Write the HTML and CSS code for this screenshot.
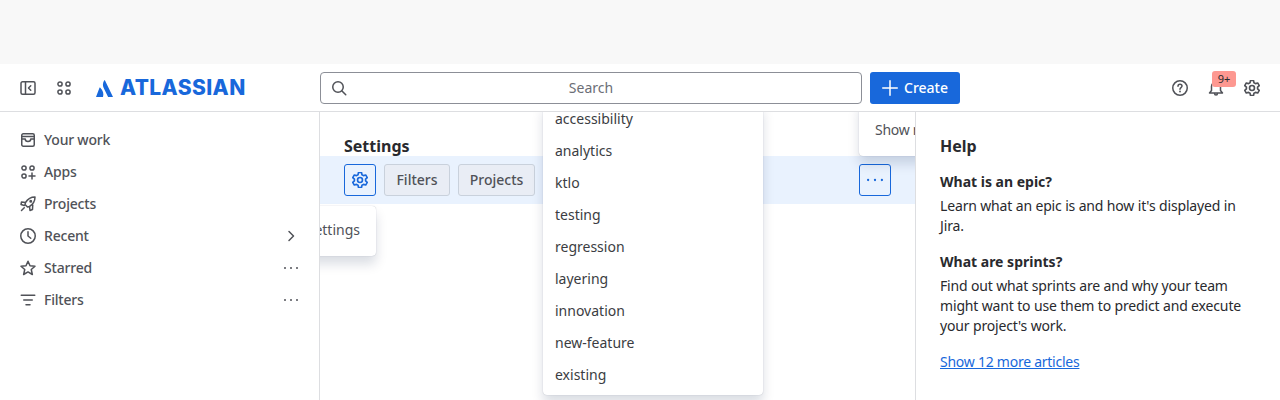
FILE: index.html
```html
<!DOCTYPE html>
<html>
    <head>
        <title>Jira</title>
        <link rel="stylesheet" href="styles.css">
    </head>
    <body>
        <svg class="sprite">
            <symbol id="gear" viewBox="0.7 0.7 14.6 14.6">
                <path d="M6.600 1.200h2.800l.4 2 1.400.8 2-.6 1.400 2.400-1.500 1.400v1.600l1.500 1.400-1.400 2.400-2-.6-1.400.8-.4 2H6.600l-.4-2-1.400-.8-2 .6-1.400-2.400 1.500-1.400V7.200L1.400 5.800l1.400-2.400 2 .6 1.400-.8z"/>
                <circle cx="8" cy="8" r="2.250"/>
            </symbol>
            <symbol id="dots" viewBox="0 0 16 16">
                <circle class="dot" cx="2" cy="8" r="1"/>
                <circle class="dot" cx="8" cy="8" r="1"/>
                <circle class="dot" cx="14" cy="8" r="1"/>
            </symbol>
        </svg>

        <div class="topband"></div>

        <header class="header">
            <div class="header-left">
                <svg class="icon" viewBox="0 0 16 16"><rect x="1" y="1.750" width="14" height="12.500" rx="1.500"/><path d="M5.500 1.750v12.500M10.750 5.750 8.500 8l2.250 2.250"/></svg>
                <svg class="icon" viewBox="0 0 16 16"><circle cx="4" cy="4" r="2.100"/><circle cx="12" cy="4" r="2.100"/><circle cx="4" cy="12" r="2.100"/><circle cx="12" cy="12" r="2.100"/></svg>
                <div class="logo">
                    <svg class="logo-mark" viewBox="0 0 17 17"><path d="M8.100.5C6.600 3.300 6.600 5.800 7.700 8l4.400 9H17L9 .5c-.3-.5-.6-.5-.9 0z"/><path d="M4.300 7.800c-.3-.4-.7-.4-.9.100L0 17h7c.9-3.200.2-6.200-2.700-9.200z"/></svg>
                    <span class="logo-text">ATLASSIAN</span>
                </div>
            </div>
            <div class="search">
                <svg class="icon" viewBox="0 0 16 16"><circle cx="7" cy="7" r="5.250"/><path d="m11 11 3.750 3.750"/></svg>
                <span class="search-text">Search</span>
            </div>
            <button class="create">
                <svg class="icon" viewBox="0 0 16 16"><path d="M8 .75v14.500M.75 8h14.500"/></svg>
                Create
            </button>
            <div class="header-right">
                <svg class="icon" viewBox="0 0 16 16"><circle cx="8" cy="8" r="7.250"/><path d="M6 6.200C6 5 6.900 4.250 8 4.250S10 5 10 6.100C10 7.600 8 7.600 8 9.250"/><circle class="dot" cx="8" cy="11.500" r=".9"/></svg>
                <div class="bell">
                    <svg class="icon" viewBox="0 0 16 16"><path d="M3.500 10.500V6.500a4.500 4.500 0 0 1 9 0v4l2 2.500H1.500zM6.500 13.250c0 1 .6 1.750 1.500 1.750s1.500-.75 1.500-1.750"/></svg>
                    <span class="badge">9+</span>
                </div>
                <svg class="icon"><use href="#gear"/></svg>
            </div>
        </header>

        <div class="layout">
            <nav class="sidebar">
                <div class="nav-item">
                    <svg class="icon" viewBox="0 0 16 16"><rect x="1.750" y="1.750" width="12.500" height="12.500" rx="1.500"/><path d="M1.750 7h3.500c0 1.500 1.200 2.500 2.750 2.500S10.750 8.500 10.750 7h3.500M1.750 4.500h12.500"/></svg>
                    <span class="nav-label">Your work</span>
                </div>
                <div class="nav-item">
                    <svg class="icon" viewBox="0 0 16 16"><circle cx="4" cy="4" r="2.100"/><circle cx="12" cy="4" r="2.100"/><circle cx="4" cy="12" r="2.100"/><path d="M12 9v6M9 12h6"/></svg>
                    <span class="nav-label">Apps</span>
                </div>
                <div class="nav-item">
                    <svg class="icon" viewBox="0 0 16 16"><path d="M5.500 6.500C8 2.500 11 1 15 1c0 4-1.500 7-5.500 9.500L7.500 11 5 8.500zM5.500 6.500 1.500 6 1 8.500l3.250 1M9.500 10.500l.5 4 2.500-1 .25-4.500M4.250 11.750 1.500 14.500"/><circle cx="10.750" cy="5.250" r=".75"/></svg>
                    <span class="nav-label">Projects</span>
                </div>
                <div class="nav-item">
                    <svg class="icon" viewBox="0 0 16 16"><circle cx="8" cy="8" r="7.250"/><path d="M8 3.750V8l2.750 2.250"/></svg>
                    <span class="nav-label">Recent</span>
                    <svg class="icon" viewBox="0 0 16 16"><path d="m6 3.500 4.500 4.500L6 12.500"/></svg>
                </div>
                <div class="nav-item">
                    <svg class="icon" viewBox="0 0 16 16"><path d="m8 1.250 2 4.500 5 .5-3.750 3.250 1.100 5L8 11.900 3.650 14.500l1.100-5L1 6.250l5-.5z"/></svg>
                    <span class="nav-label">Starred</span>
                    <svg class="icon"><use href="#dots"/></svg>
                </div>
                <div class="nav-item">
                    <svg class="icon" viewBox="0 0 16 16"><path d="M1.250 3.250h13.500M3.750 8h8.500M6 12.750h4"/></svg>
                    <span class="nav-label">Filters</span>
                    <svg class="icon"><use href="#dots"/></svg>
                </div>
            </nav>

            <main class="main">
                <h2 class="main-title">Settings</h2>
                <div class="toolbar">
                    <button class="tool tool-active"><svg class="icon"><use href="#gear"/></svg></button>
                    <button class="tool tool-filters">Filters</button>
                    <button class="tool tool-projects">Projects</button>
                    <button class="tool tool-active tool-end"><svg class="icon"><use href="#dots"/></svg></button>
                </div>

                <div class="popup popup-settings">Settings</div>
                <div class="popup popup-more">Show more</div>

                <ul class="menu">
                    <li>accessibility</li>
                    <li>analytics</li>
                    <li>ktlo</li>
                    <li>testing</li>
                    <li>regression</li>
                    <li>layering</li>
                    <li>innovation</li>
                    <li>new-feature</li>
                    <li>existing</li>
                </ul>
            </main>

            <aside class="help">
                <h2 class="help-title">Help</h2>
                <h3>What is an epic?</h3>
                <p>Learn what an epic is and how it's displayed in Jira.</p>
                <h3>What are sprints?</h3>
                <p>Find out what sprints are and why your team might want to use them to predict and execute your project's work.</p>
                <a class="help-link" href="#">Show 12 more articles</a>
            </aside>
        </div>
    </body>
</html>
```

FILE: styles.css
```css
* {
    box-sizing: border-box;
}

html, body {
    height: 400px;
    overflow: hidden;
}

body {
    margin: 0;
    background-color: white;
    color: #292a2e;
    font-family: "Noto Sans", "Liberation Sans", sans-serif;
    font-size: 14px;
    line-height: 20px;
}

.sprite {
    display: none;
}

.icon {
    display: block;
    flex: none;
    width: 16px;
    height: 16px;
    color: #505258;
    fill: none;
    stroke: currentColor;
    stroke-width: 1.5;
    stroke-linecap: round;
    stroke-linejoin: round;
}

.dot {
    fill: currentColor;
    stroke: none;
}

.topband {
    height: 64px;
    background-color: #f8f8f8;
}

/* top bar */
.header {
    display: flex;
    align-items: center;
    height: 48px;
    padding-top: 1px;
    border-bottom: 1px solid #dddee1;
}

.header-left {
    display: flex;
    align-items: center;
    gap: 20px;
    width: 320px;
    padding-left: 20px;
}

.logo {
    display: flex;
    align-items: center;
    gap: 7px;
    margin-left: 4px;
}

.logo-mark {
    display: block;
    width: 17px;
    height: 17px;
    fill: #1868db;
}

.logo-text {
    color: #1868db;
    font-family: Inter, "Noto Sans", sans-serif;
    font-size: 21px;
    font-weight: 800;
    letter-spacing: .4px;
    line-height: 24px;
}

.search {
    position: relative;
    display: flex;
    align-items: center;
    justify-content: center;
    width: 542px;
    height: 32px;
    border: 1px solid #8c8f97;
    border-radius: 4px;
    color: #6b6e76;
}

.search .icon {
    position: absolute;
    left: 10px;
}

.create {
    display: flex;
    align-items: center;
    gap: 6px;
    width: 90px;
    height: 32px;
    margin-left: 8px;
    padding: 0 0 0 12px;
    border: none;
    border-radius: 3px;
    background-color: #1868db;
    color: white;
    font: inherit;
    font-weight: 500;
}

.create .icon {
    color: white;
}

.header-right {
    display: flex;
    align-items: center;
    gap: 20px;
    margin-left: auto;
    padding-right: 20px;
}

.bell {
    position: relative;
}

.badge {
    position: absolute;
    top: -9px;
    left: 4px;
    width: 24px;
    height: 16px;
    border-radius: 3px;
    background-color: #fd9891;
    font-size: 11px;
    line-height: 16px;
    text-align: center;
}

/* page body */
.layout {
    display: flex;
    height: 288px;
}

.sidebar {
    flex: none;
    width: 320px;
    padding: 12px 20px 0;
    border-right: 1px solid #dddee1;
}

.nav-item {
    display: flex;
    align-items: center;
    gap: 8px;
    height: 32px;
    color: #505258;
    font-weight: 500;
    letter-spacing: -.2px;
}

.nav-label {
    flex: 1;
}

.main {
    position: relative;
    flex: 1;
    overflow: hidden;
}

.main-title {
    margin: 0;
    padding: 24px 24px 0;
    height: 44px;
    font-size: 16px;
    font-weight: 700;
    line-height: 20px;
}

.toolbar {
    display: flex;
    align-items: center;
    gap: 8px;
    height: 48px;
    padding: 0 24px;
    background-color: #e9f2fe;
}

.tool {
    height: 32px;
    padding: 0;
    border: 1px solid #c9d1dc;
    border-radius: 3px;
    background-color: #e9edf5;
    color: #505258;
    font: inherit;
    font-weight: 500;
    white-space: nowrap;
}

.tool-filters {
    width: 66px;
}

.tool-projects {
    width: 77px;
}

.tool-active {
    width: 32px;
    padding: 0 7px;
    border-color: #1868db;
    background-color: #e9f2fe;
}

.tool-active .icon {
    color: #1868db;
}

.tool-end .icon {
    transform: scale(1.15);
}

.tool-end {
    margin-left: auto;
}

.popup, .menu {
    position: absolute;
    background-color: white;
    box-shadow: 0 8px 12px rgba(9, 30, 66, .15), 0 0 1px rgba(9, 30, 66, .31);
}

.popup {
    border-radius: 4px;
    color: #505258;
}

.popup-settings {
    top: 94px;
    left: -40px;
    width: 96px;
    height: 50px;
    padding: 14px 16px 0;
    text-align: right;
}

.popup-more {
    top: -12px;
    left: 539px;
    width: 130px;
    height: 56px;
    padding: 20px 16px 0;
    letter-spacing: -.3px;
    white-space: nowrap;
}

.menu {
    top: -9px;
    left: 223px;
    width: 220px;
    margin: 0;
    padding: 0 0 4px;
    border-radius: 4px;
    list-style: none;
}

.menu li {
    height: 32px;
    padding: 6px 12px;
    color: #3b3d42;
}

/* help panel */
.help {
    position: relative;
    flex: none;
    width: 365px;
    padding: 24px 24px 0;
    border-left: 1px solid #dddee1;
    background-color: white;
}

.help-title {
    margin: 0 0 16px;
    font-size: 16px;
    font-weight: 700;
    line-height: 20px;
}

.help h3 {
    margin: 0 0 4px;
    font-size: 14px;
    font-weight: 700;
    line-height: 20px;
}

.help p {
    margin: 0 0 16px;
    letter-spacing: -.15px;
}

.help-link {
    display: block;
    margin-top: 16px;
    color: #1868db;
    letter-spacing: -.25px;
}
```
